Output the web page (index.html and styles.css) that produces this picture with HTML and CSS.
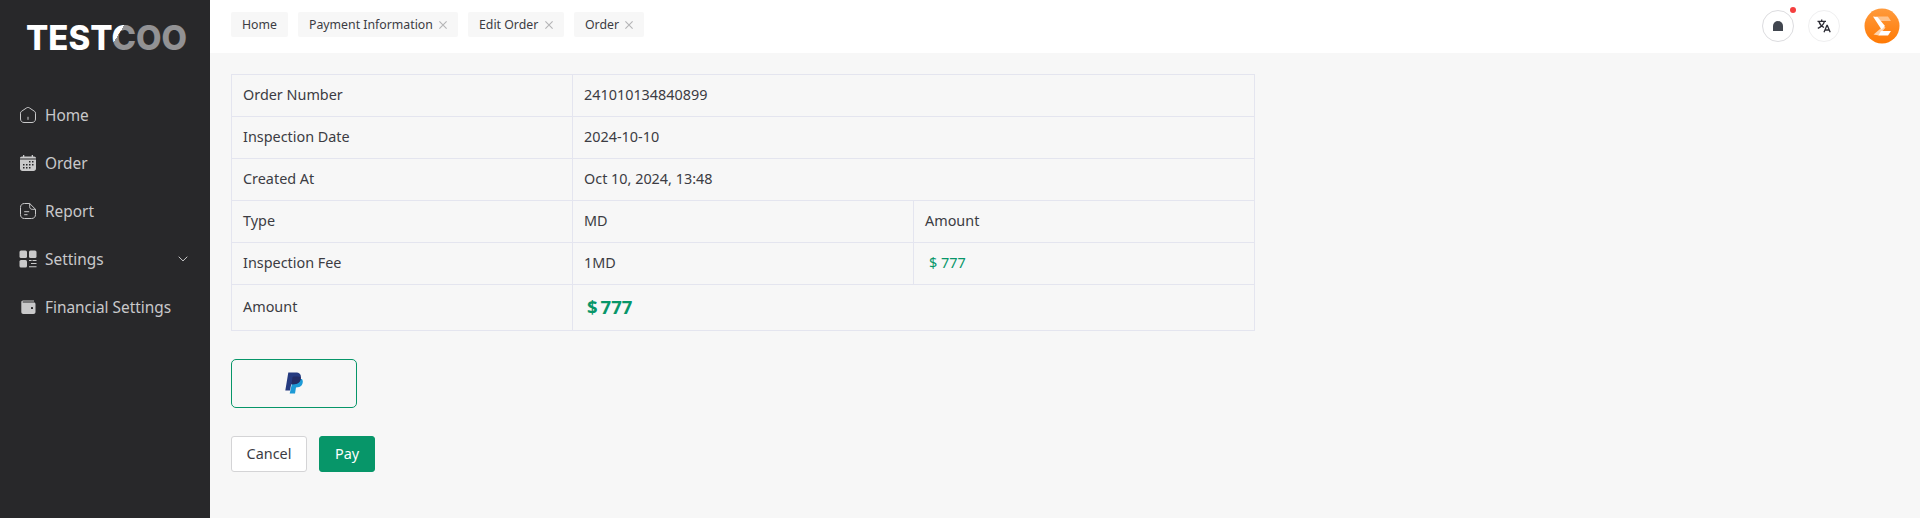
FILE: index.html
```html
<!DOCTYPE html>
<html lang="en">
<head>
    <meta charset="UTF-8">
    <meta name="viewport" content="width=device-width, initial-scale=1.0">
    <title>Order Payment</title>
    <link rel="stylesheet" href="styles.css">
</head>
<body>
    <aside class="sidebar">
        <svg class="logo" width="170" height="44" viewBox="0 0 170 44">
            <defs>
                <linearGradient id="logoFill" gradientUnits="userSpaceOnUse" x1="82" y1="10" x2="106" y2="25">
                    <stop offset="0.5" stop-color="#fff"/>
                    <stop offset="0.5" stop-color="#929294"/>
                </linearGradient>
            </defs>
            <text class="logo-text" x="1" y="34" textLength="161" lengthAdjust="spacingAndGlyphs" fill="url(#logoFill)">TESTCOO</text>
        </svg>
        <nav class="menu">
            <a class="menu-item">
                <svg class="menu-icon" viewBox="0 0 16 16" fill="none" stroke="currentColor">
                    <path d="M.5 6.2c0-.9.3-1.4 1-1.9L6.600.9c.8-.6 2-.6 2.800 0L14.500 4.300c.7.5 1 1 1 1.900V12c0 2-1.500 3.500-3.500 3.500H4C2 15.500.5 14 .5 12z"/>
                    <path d="M8 9.800v3"/>
                </svg>
                <span>Home</span>
            </a>
            <a class="menu-item">
                <svg class="menu-icon" viewBox="0 0 16 16">
                    <path fill="currentColor" d="M2 1.500h1V0h1.300v1.500h7.400V0H13v1.500h1c1.200 0 2 .7 2 1.800v.2H0v-.2c0-1.100.8-1.800 2-1.800zM0 4.500h16v9c0 1.500-1 2.500-2.500 2.500h-11C1 16 0 15 0 13.500z"/>
                    <path fill="#28282a" d="M9 6h1.500v1.500H9zM12 6h1.500v1.500H12zM3 9h1.500v1.500H3zM6 9h1.500v1.500H6zM9 9h1.500v1.500H9zM12 9h1.500v1.500H12zM3 12h1.500v1.500H3zM6 12h1.500v1.500H6zM9 12h1.500v1.500H9z"/>
                </svg>
                <span>Order</span>
            </a>
            <a class="menu-item">
                <svg class="menu-icon" viewBox="0 0 16 16" fill="none" stroke="currentColor">
                    <path d="M9.700.5H4.500c-2.500 0-4 1.500-4 4v7c0 2.500 1.500 4 4 4h7c2.500 0 4-1.500 4-4V6.300z"/>
                    <path d="M9.700.5v3.300c0 1.600.9 2.500 2.500 2.500h3.300M4.200 8.700h5M4.200 11.700h3.300"/>
                </svg>
                <span>Report</span>
            </a>
            <a class="menu-item">
                <svg class="menu-icon" viewBox="0 0 16 16" fill="currentColor">
                    <rect x="-.5" y="-.5" width="7.500" height="7.500" rx="1.500"/>
                    <rect x="9" y="-.5" width="7.500" height="7.500" rx="1.500"/>
                    <rect x="-.5" y="9" width="7.500" height="7.500" rx="1.500"/>
                    <path d="M9 9h2.600v1.100H9zM12.500 9h4v1.100h-4zM11 11.900h5.500V13H11zM9 15.200h7.500v1.100H9z"/>
                </svg>
                <span>Settings</span>
                <svg class="menu-arrow" width="10" height="6" viewBox="0 0 10 6" fill="none" stroke="currentColor">
                    <path d="M.7.7L5 4.900 9.300.7"/>
                </svg>
            </a>
            <a class="menu-item">
                <svg class="menu-icon" viewBox="0 0 16 16">
                    <path fill="currentColor" d="M3 1.500h11v1H3c-.6 0-.6 1 0 1h11c.9 0 1.500.6 1.500 1.500v8c0 1.200-.8 2-2 2H3.300c-1.200 0-2-.8-2-2V3.300c0-1.100.7-1.800 1.700-1.800z"/>
                    <rect x="11" y="8" width="2" height="2" rx=".5" fill="#28282a"/>
                </svg>
                <span>Financial Settings</span>
            </a>
        </nav>
    </aside>

    <div class="page">
        <header class="topbar">
            <div class="tabs">
                <a class="tab tab-home"><span>Home</span></a>
                <a class="tab tab-payment"><span>Payment Information</span>
                    <svg class="close" viewBox="0 0 8 8"><path d="M.4.4l7.200 7.200M7.600.4L.4 7.600"/></svg>
                </a>
                <a class="tab tab-edit"><span>Edit Order</span>
                    <svg class="close" viewBox="0 0 8 8"><path d="M.4.4l7.200 7.200M7.600.4L.4 7.600"/></svg>
                </a>
                <a class="tab tab-order"><span>Order</span>
                    <svg class="close" viewBox="0 0 8 8"><path d="M.4.4l7.200 7.200M7.600.4L.4 7.600"/></svg>
                </a>
            </div>
            <div class="actions">
                <div class="round-btn notice">
                    <svg width="10" height="10" viewBox="0 0 10 10"><path fill="#41464f" d="M0 10V5a5 5 0 0 1 10 0v5z"/></svg>
                    <i class="dot"></i>
                </div>
                <div class="round-btn lang">
                    <svg width="14" height="14" viewBox="0 0 14 14" fill="none" stroke="#2c2c35" stroke-width="1.300">
                        <path d="M.5 2.300h8.500M4.700.5v1.800M2 2.800c.8 2.500 2.800 4.700 5 5.700M7.300 2.800C6.500 5.500 4 8 .8 9.300M7 13.200l2.900-6.700h.4l2.900 6.700M8 11h4.200"/>
                    </svg>
                </div>
                <svg class="avatar" width="36" height="36" viewBox="0 0 36 36">
                    <defs>
                        <linearGradient id="avatarFill" x1="0" y1="0" x2="0" y2="1">
                            <stop offset="0" stop-color="#ff9a3c"/>
                            <stop offset="1" stop-color="#ff7a05"/>
                        </linearGradient>
                    </defs>
                    <circle cx="18" cy="18" r="17.500" fill="url(#avatarFill)"/>
                    <path fill="#fff" fill-opacity=".45" d="M12 8.500h12l3 4.500H16z"/>
                    <path fill="#fff" fill-opacity=".65" d="M9.500 26.500L19 18.500l2.500 1L15 27.500z"/>
                    <path fill="#fff" d="M9 8.500l4.500.5 7.500 9-3.500 3.500zM17 23h10l-3 4.500H14.500z"/>
                </svg>
            </div>
        </header>

        <main class="content">
            <table class="order-table">
                <tr><td>Order Number</td><td colspan="2">241010134840899</td></tr>
                <tr><td>Inspection Date</td><td colspan="2">2024-10-10</td></tr>
                <tr><td>Created At</td><td colspan="2">Oct 10, 2024, 13:48</td></tr>
                <tr><td>Type</td><td>MD</td><td>Amount</td></tr>
                <tr><td>Inspection Fee</td><td>1MD</td><td><span class="price">$ 777</span></td></tr>
                <tr class="total-row"><td>Amount</td><td colspan="2"><span class="total"><span>$</span><span>777</span></span></td></tr>
            </table>

            <div class="pay-method">
                <svg width="18" height="22" viewBox="0 0 18 22">
                    <path fill="#1d9ad6" d="M8 7h9c1.300 2 1 4.500-.3 6.300-1.300 1.700-3.200 2.200-5.700 2.200L10 21.500H4.700z"/>
                    <path fill="#253b80" d="M3.300.5h7.200c4 0 6 2 5.300 5.700-.7 4.200-3.500 6-7.500 6H6.200L5 18.500H.3z"/>
                    <path fill="#222d65" d="M7.500 5.500c.1-.6.500-.9 1-.9h4c1.300 0 2.500.2 3.300.7.200 4.700-2.800 6.900-7.500 6.900H6.500z"/>
                </svg>
            </div>

            <div class="buttons">
                <button class="btn btn-cancel" type="button">Cancel</button>
                <button class="btn btn-pay" type="button">Pay</button>
            </div>
        </main>
    </div>
</body>
</html>
```
FILE: styles.css
```css
* {
    box-sizing: border-box;
}
body {
    display: flex;
    height: 518px;
    margin: 0;
    background-color: #f7f7f7;
    color: #3c3c43;
    font-family: "Noto Sans", "Open Sans", sans-serif;
    font-size: 14.4px;
}
.sidebar {
    flex: none;
    width: 210px;
    padding: 16px 0 0;
    background-color: #28282a;
    color: #c9c9ca;
}
.logo {
    display: block;
    margin-left: 25px;
}
.logo-text {
    font-family: Inter, sans-serif;
    font-size: 33.5px;
    font-weight: 800;
}
.menu {
    margin-top: 31px;
}
.menu-item {
    display: flex;
    align-items: center;
    height: 48px;
    padding: 0 22px 0 20px;
    font-size: 15.4px;
}
.menu-icon {
    width: 16px;
    height: 16px;
    margin-right: 9px;
    overflow: visible;
}
.menu-arrow {
    margin-left: auto;
}
.page {
    flex: 1;
}
.topbar {
    display: flex;
    justify-content: space-between;
    height: 53px;
    padding: 0 20px 0 21px;
    background-color: #fff;
}
.tabs {
    display: flex;
    gap: 10px;
    padding-top: 12px;
}
.tab {
    display: flex;
    align-items: center;
    justify-content: space-between;
    height: 25px;
    padding: 0 11px;
    border-radius: 2px;
    background-color: #f7f7f7;
    font-size: 12.3px;
    white-space: nowrap;
}
.tab-home {
    width: 57px;
}
.tab-payment {
    width: 160px;
}
.tab-edit {
    width: 96px;
}
.tab-order {
    width: 70px;
}
.close {
    width: 8px;
    height: 8px;
    stroke: #b4b4b6;
    stroke-width: 1.1;
}
.actions {
    display: flex;
    align-items: center;
    height: 52px;
}
.round-btn {
    position: relative;
    display: flex;
    align-items: center;
    justify-content: center;
    width: 32px;
    height: 32px;
    margin-right: 14px;
    border: 1px solid #dcdcdf;
    border-radius: 50%;
}
.lang {
    margin-right: 24px;
    border-color: #efeff0;
}
.dot {
    position: absolute;
    top: -4px;
    right: -3px;
    width: 6px;
    height: 6px;
    border-radius: 50%;
    background-color: #f53f3f;
}
.content {
    padding: 21px;
}
.order-table {
    width: 1024px;
    table-layout: fixed;
    border-collapse: collapse;
}
.order-table td {
    height: 42px;
    padding: 0 11px 2px;
    border: 1px solid #e4e5ef;
    line-height: 20px;
}
.order-table .total-row td {
    height: 46px;
}
.price {
    margin-left: 4px;
    color: #079669;
}
.total {
    display: flex;
    gap: 3px;
    margin-left: 3px;
    color: #079669;
    font-size: 18.5px;
    font-weight: bold;
}
.pay-method {
    display: flex;
    align-items: center;
    justify-content: center;
    width: 126px;
    height: 49px;
    margin-top: 28px;
    padding-bottom: 1px;
    border: 1px solid #079669;
    border-radius: 5px;
}
.buttons {
    display: flex;
    gap: 12px;
    margin-top: 28px;
}
.btn {
    height: 36px;
    padding: 0 0 2px;
    border: 1px solid #d4d4d6;
    border-radius: 3px;
    background-color: #fff;
    color: #3c3c43;
    font-family: inherit;
    font-size: 14.4px;
}
.btn-cancel {
    width: 76px;
}
.btn-pay {
    width: 56px;
    border-color: #079669;
    background-color: #079669;
    color: #fff;
}
```
